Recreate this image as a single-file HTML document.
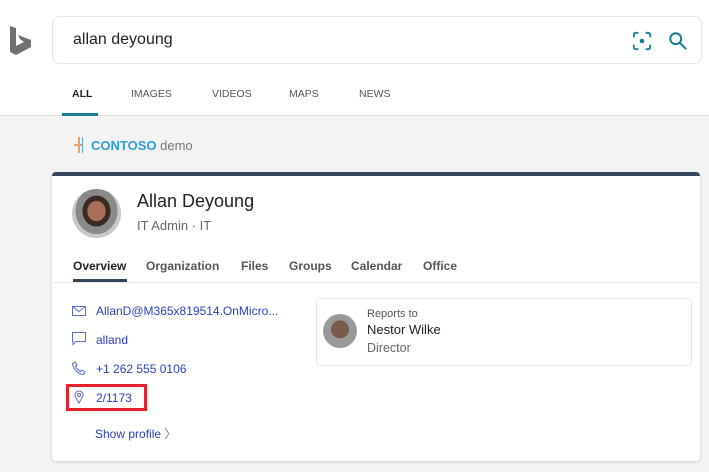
<!DOCTYPE html>
<html><head><meta charset="utf-8"><style>
*{margin:0;padding:0;box-sizing:border-box}
body{width:709px;height:472px;overflow:hidden;background:#f3f3f3;font-family:"Liberation Sans",Arial,sans-serif;position:relative}
.top{position:absolute;left:0;top:0;width:709px;height:116px;background:#fff;border-bottom:1px solid #ddd}
.abs{position:absolute}
.search{left:52px;top:16px;width:650px;height:48px;border:1px solid #e4e4e4;border-radius:8px;background:#fff}
.nav{top:88px;font-size:10.5px;color:#555}
.card{left:52px;top:172px;width:648px;height:289px;background:#fff;border-top:4px solid #34475a;border-radius:4px;box-shadow:0 1px 3px rgba(0,0,0,.15)}
.tab{top:259px;font-size:12px;font-weight:bold;color:#555}
.link{font-size:12px;color:#2a3fbf}
</style></head><body>
<div class="top"></div>
<svg class="abs" style="left:10px;top:26px" width="22" height="30" viewBox="0 0 22 30"><path d="M0 0 L6 2 V20 L14 16 L10 13 L8 9 L21 14 V21 L6 29 L0 26Z" fill="#707070"/></svg>
<div class="abs search"></div>
<div class="abs" style="left:73px;top:31px;font-size:16px;color:#222">allan deyoung</div>
<svg class="abs" style="left:632px;top:31px" width="20" height="20" viewBox="0 0 22 22" fill="none" stroke="#167c93" stroke-width="2"><path d="M2 7V4a2 2 0 012-2h3M15 2h3a2 2 0 012 2v3M20 15v3a2 2 0 01-2 2h-3M7 20H4a2 2 0 01-2-2v-3"/><circle cx="11" cy="11" r="2.5" fill="#167c93" stroke="none"/></svg>
<svg class="abs" style="left:668px;top:31px" width="20" height="20" viewBox="0 0 22 22" fill="none" stroke="#167c93" stroke-width="2.2"><circle cx="8.5" cy="8.5" r="6"/><path d="M13 13l7 7"/></svg>
<div class="abs nav" style="left:72px;color:#222;font-weight:bold">ALL</div>
<div class="abs" style="left:62px;top:113px;width:36px;height:3px;background:#167c93"></div>
<div class="abs nav" style="left:131px">IMAGES</div>
<div class="abs nav" style="left:212px">VIDEOS</div>
<div class="abs nav" style="left:289px">MAPS</div>
<div class="abs nav" style="left:359px">NEWS</div>
<div class="abs" style="left:78px;top:137px;width:2px;height:16px;background:#f0a060"></div>
<div class="abs" style="left:74px;top:144px;width:8px;height:2px;background:#f0a060"></div>
<div class="abs" style="left:82px;top:137px;width:1px;height:16px;background:#4ab0e0"></div>
<div class="abs" style="left:91px;top:138px;font-size:13px;color:#2aa0d8;font-weight:bold">CONTOSO <span style="color:#777;font-weight:normal">demo</span></div>
<div class="abs card"></div>
<div class="abs" style="left:72px;top:189px;width:49px;height:49px;border-radius:50%;background:radial-gradient(ellipse at 50% 45%,#a87058 0 26%,#3a2a22 27% 40%,#8a8a8a 41% 60%,#c8c8c8 61%)"></div>
<div class="abs" style="left:137px;top:191px;font-size:18px;color:#222">Allan Deyoung</div>
<div class="abs" style="left:137px;top:218px;font-size:13px;color:#666">IT Admin · IT</div>
<div class="abs tab" style="left:73px;color:#222">Overview</div>
<div class="abs" style="left:73px;top:279px;width:54px;height:3px;background:#34475a"></div>
<div class="abs tab" style="left:146px">Organization</div>
<div class="abs tab" style="left:241px">Files</div>
<div class="abs tab" style="left:289px">Groups</div>
<div class="abs tab" style="left:351px">Calendar</div>
<div class="abs tab" style="left:423px">Office</div>
<div class="abs" style="left:53px;top:282px;width:646px;height:1px;background:#e6e6e6"></div>
<svg class="abs" style="left:72px;top:305px" width="14" height="12" viewBox="0 0 14 12" fill="none" stroke="#5a6ad0"><rect x=".5" y="1.5" width="13" height="9"/><path d="M.5 1.5l6.5 5 6.5-5"/></svg>
<div class="abs link" style="left:96px;top:304px">AllanD@M365x819514.OnMicro...</div>
<svg class="abs" style="left:72px;top:332px" width="14" height="14" viewBox="0 0 14 14" fill="none" stroke="#5a6ad0"><path d="M.5 .5h13v9H4l-3 3v-3H.5z"/></svg>
<div class="abs link" style="left:96px;top:333px">alland</div>
<svg class="abs" style="left:72px;top:361px" width="14" height="14" viewBox="0 0 14 14" fill="none" stroke="#5a6ad0"><path d="M3 1l2 3-1.5 1.5c1 2 3 4 5 5L10 9l3 2-1.5 2.5C6 13 1 8 .5 2.5z"/></svg>
<div class="abs link" style="left:96px;top:362px">+1 262 555 0106</div>
<div class="abs" style="left:66px;top:384px;width:81px;height:27px;border:3px solid #e8202a"></div>
<svg class="abs" style="left:74px;top:390px" width="10" height="14" viewBox="0 0 10 14" fill="none" stroke="#5a6ad0"><path d="M5 13L1.5 7A4 4 0 118.5 7z"/><circle cx="5" cy="5" r="1.5"/></svg>
<div class="abs link" style="left:96px;top:391px">2/1173</div>
<div class="abs link" style="left:95px;top:425px">Show profile <span style="color:#777">〉</span></div>
<div class="abs" style="left:316px;top:298px;width:376px;height:68px;border:1px solid #e6e6e6;border-radius:5px;background:#fff"></div>
<div class="abs" style="left:323px;top:314px;width:34px;height:34px;border-radius:50%;background:radial-gradient(circle at 50% 45%,#7a5a48 0 35%,#999 36%)"></div>
<div class="abs" style="left:367px;top:308px;font-size:11px;color:#555">Reports to</div>
<div class="abs" style="left:367px;top:322px;font-size:13px;color:#222">Nestor Wilke</div>
<div class="abs" style="left:367px;top:341px;font-size:12.5px;color:#666">Director</div>
</body></html>
